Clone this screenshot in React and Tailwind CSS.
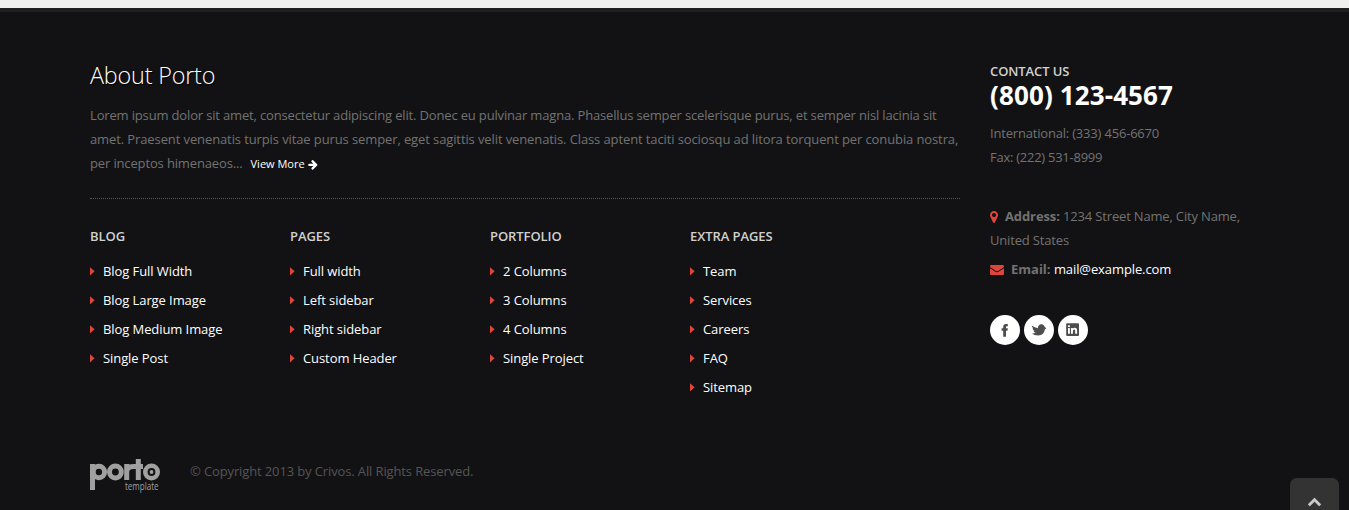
const DIM = "text-[#727272]";

function CaretRight() {
  return (
    <svg viewBox="0 0 5 9" className="mt-px h-[9px] w-[5px] shrink-0 fill-[#e0453c]">
      <path d="M0 0.2L4.6 4.3L0 8.4Z" />
    </svg>
  );
}

function ArrowRight() {
  return (
    <svg viewBox="120 0 1536 1792" className="ml-[3px] inline-block h-[11px] w-[10px] fill-white align-[-2px]">
      <path d="M1600 960q0 54-37 91l-651 651q-39 37-91 37-51 0-90-37l-75-75q-38-38-38-91t38-91l293-293h-704q-52 0-84.5-37.5t-32.5-90.5v-128q0-53 32.5-90.5t84.5-37.5h704l-293-294q-38-36-38-90t38-90l75-75q38-38 90-38 53 0 91 38l651 651q37 35 37 90z" />
    </svg>
  );
}

function MapMarker() {
  return (
    <svg viewBox="384 128 1024 1536" className="mr-[7px] inline-block h-[12px] w-[8px] fill-[#e0453c] align-[-2px]">
      <path d="M1152 640q0-106-75-181t-181-75-181 75-75 181 75 181 181 75 181-75 75-181zm256 0q0 109-33 179l-364 774q-16 33-47.5 52t-67.5 19-67.5-19-46.5-52l-365-774q-33-70-33-179 0-212 150-362t362-150 362 150 150 362z" />
    </svg>
  );
}

function Envelope() {
  return (
    <svg viewBox="0 256 1792 1408" preserveAspectRatio="none" className="mr-[7px] inline-block h-[10px] w-[14px] fill-[#e0453c] align-[-1px]">
      <path d="M1792 710v794q0 66-47 113t-113 47h-1472q-66 0-113-47t-47-113v-794q44 49 101 87 362 246 497 345 57 42 92.5 65.5t94.5 48 110 24.5h2q51 0 110-24.5t94.5-48 92.5-65.5q170-123 498-345 57-39 100-87zm0-294q0 79-49 151t-122 123q-376 261-468 325-10 7-42.5 31t-54 38.5-52 32.5-57.5 27-50 9h-2q-23 0-50-9t-57.5-27-52-32.5-54-38.5-42.5-31q-91-64-262-182.5t-205-142.5q-62-42-117-115.5t-55-136.5q0-78 41.5-130t118.5-52h1472q65 0 112.5 47t47.5 113z" />
    </svg>
  );
}

function ChevronUp() {
  return (
    <svg viewBox="90 400 1612 1200" className="h-[10px] w-[13px] fill-[#c8c8c8]">
      <path d="M1683 1331l-166 165q-19 19-45 19t-45-19l-531-531-531 531q-19 19-45 19t-45-19l-166-165q-19-19-19-45.5t19-45.5l742-741q19-19 45-19t45 19l742 741q19 19 19 45.5t-19 45.5z" />
    </svg>
  );
}

const SOCIAL = [
  {
    name: "Facebook",
    art: <path d="M13.2 21.8V15.8H11.6V13.3H13.2V11.9Q13.2 8.9 16 8.9H17.8V11.3H16.8Q16 11.3 16 12.1V13.3H17.8L17.5 15.8H16V21.8Z" />,
  },
  {
    name: "Twitter",
    art: <path d="M7.800 10.500C10 11.800 12 12.900 13.800 13.200C14 11 15.300 9.300 17.200 9.300C18.400 9.300 19.300 9.800 19.800 10.500L20.800 11.700L22.300 13.500L20.800 14.200C20.600 17.900 18 20.400 14.200 20.400C11.600 20.400 9.300 19.700 8 18.400C9.500 18.600 10.800 18.300 11.700 17.600C10.500 17.400 9.800 16.700 9.500 15.900L10.500 15.700C9.200 15.200 8.600 14.200 8.600 13.200L9.500 13.300C8.400 12.600 7.900 11.800 7.800 10.500Z" />,
  },
  {
    name: "LinkedIn",
    art: (
      <>
        <rect x="8.200" y="8.300" width="12.800" height="12.700" rx="1" />
        <path className="fill-white" d="M10 13H11.900V18.800H10ZM10 10.300H11.900V12.000H10ZM13 13H14.800V13.700Q15.500 12.800 16.700 12.800Q19.100 12.800 19.100 15.500V18.800H17.200V15.800Q17.200 14.500 16.200 14.500Q14.900 14.500 14.900 16V18.800H13Z" />
      </>
    ),
  },
];

const COLUMNS = [
  { title: "Blog", links: ["Blog Full Width", "Blog Large Image", "Blog Medium Image", "Single Post"] },
  { title: "Pages", links: ["Full width", "Left sidebar", "Right sidebar", "Custom Header"] },
  { title: "Portfolio", links: ["2 Columns", "3 Columns", "4 Columns", "Single Project"] },
  { title: "Extra Pages", links: ["Team", "Services", "Careers", "FAQ", "Sitemap"] },
];

function Logo() {
  return (
    <svg viewBox="0 0 72 40" className="h-[40px] w-[72px]" fill="none" stroke="#a0a0a0" strokeWidth="5">
      <path d="M2.500 7V33" />
      <circle cx="8.900" cy="15" r="5.700" />
      <circle cx="25.400" cy="15" r="5.900" />
      <path d="M36.700 23V7M36.700 15Q36.700 9.500 43.500 9.500" />
      <path d="M48.300 2V23M43 9.500H53" />
      <circle cx="61.500" cy="15" r="6.200" strokeWidth="4.600" />
      <circle cx="61.500" cy="15" r="1.900" fill="#a0a0a0" stroke="none" />
      <text x="35" y="32.800" textLength="33.500" lengthAdjust="spacingAndGlyphs" fontSize="10" fill="#a0a0a0" stroke="none">template</text>
    </svg>
  );
}

export default function App() {
  return (
    <div className="relative h-[510px] overflow-hidden bg-[#f0f0ed] pt-2 font-['Open_Sans',sans-serif] text-[13px] leading-6">
      <footer className="h-[502px] border-t-4 border-[#1f1f21] bg-[#121214]">
        <div className="ml-[90px] flex w-[1170px] gap-[30px] pt-[46px]">
          <div className="w-[870px] shrink-0">
            <h2 className="h-[45px] pt-[4px] text-[23.400px] leading-[27px] font-light tracking-[-0.2px] text-white [text-shadow:1px_1px_1px_#000]">About Porto</h2>
            <p className={`${DIM} h-[96px] whitespace-nowrap border-b border-dotted border-[#555555]`}>
              <span className="tracking-[-0.158px]">Lorem ipsum dolor sit amet, consectetur adipiscing elit. Donec eu pulvinar magna. Phasellus semper scelerisque purus, et semper nisl lacinia sit</span><br />
              <span className="tracking-[-0.108px]">amet. Praesent venenatis turpis vitae purus semper, eget sagittis velit venenatis. Class aptent taciti sociosqu ad litora torquent per conubia nostra,</span><br />
              <span className="tracking-[-0.14px]">per inceptos himenaeos...</span>
              <a className="ml-[8px] text-[11px] text-white">View More<ArrowRight /></a>
            </p>
            <div className="flex pt-[25px]">
              {COLUMNS.map((column) => (
                <div key={column.title} className="w-[200px]">
                  <h5 className="mb-[8px] font-semibold tracking-[-0.08px] uppercase text-[#d0d0d0]">{column.title}</h5>
                  <ul>
                    {column.links.map((link) => (
                      <li key={link} className="flex h-[29px] items-center gap-2 tracking-[-0.08px] text-white">
                        <CaretRight />
                        {link}
                      </li>
                    ))}
                  </ul>
                </div>
              ))}
            </div>
          </div>
          <div className="w-[270px]">
            <h5 className="h-[24px] pt-px font-semibold tracking-[-0.1px] uppercase text-[#d0d0d0]">Contact Us</h5>
            <p className="h-[39px] text-[26px] leading-[26px] font-bold tracking-[0.12px] text-white">(800) 123-4567</p>
            <p className={`${DIM} tracking-[-0.19px]`}>International: (333) 456-6670</p>
            <p className={`${DIM} tracking-[-0.26px]`}>Fax: (222) 531-8999</p>
            <p className={`${DIM} mt-[35px] tracking-[-0.17px]`}>
              <MapMarker /><strong className="tracking-[-0.1px]">Address:</strong> 1234 Street Name, City Name, United States
            </p>
            <p className={`${DIM} mt-[5px]`}>
              <Envelope /><strong>Email:</strong> <a className="tracking-[-0.1px] text-white">mail@example.com</a>
            </p>
            <div className="mt-[34px] flex gap-1">
              {SOCIAL.map((item) => (
                <a key={item.name} aria-label={item.name} className="size-[30px] rounded-full bg-white">
                  <svg viewBox="0 0 30 30" className="size-[30px] fill-[#4d4d4d]">{item.art}</svg>
                </a>
              ))}
            </div>
          </div>
        </div>
        <div className="ml-[90px] flex pt-[56px]">
          <div className="w-[100px]"><Logo /></div>
          <p className="pt-[2px] tracking-[-0.125px] text-[#555555]">© Copyright 2013 by Crivos. All Rights Reserved.</p>
        </div>
      </footer>
      <a aria-label="Scroll to top" className="absolute top-[478px] right-[10px] flex h-[40px] w-[49px] justify-center rounded-t-[7px] bg-[#333333] pt-[19px]">
        <ChevronUp />
      </a>
    </div>
  );
}
